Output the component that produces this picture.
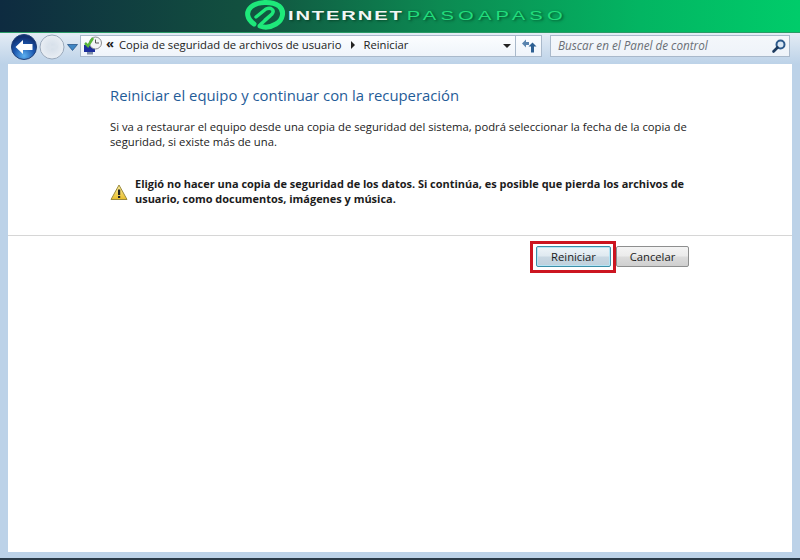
<div class="window">
  <header class="banner">
    <svg class="logo" width="42" height="30" viewBox="0 0 42 30">
      <path d="M10 24 C3 19 1.500 12 7 7 C13 1.500 28 1 35 6 C41 11 39 20 32 24 C27 27 21 28 16 26" fill="none" stroke="#1ee87a" stroke-width="5" stroke-linecap="round"/>
      <path d="M12 17 L22 9 C27 7 31 10 28 14 L21 20 M17 24 L26 16" stroke="#1ee87a" stroke-width="3.500" fill="none" stroke-linecap="round"/>
    </svg>
    <span class="brand"><span class="w">INTERNET</span><span class="g">PASOAPASO</span></span>
  </header>
  <div class="frame">
    <nav class="toolbar">
      <div class="navbtns">
        <svg width="72" height="30" viewBox="0 0 72 30">
          <defs>
            <radialGradient id="b" cx="50%" cy="85%" r="75%"><stop offset="0" stop-color="#5cb0f0"/><stop offset="0.55" stop-color="#1c58b0"/><stop offset="1" stop-color="#102f70"/></radialGradient>
            <radialGradient id="s" cx="50%" cy="50%" r="60%"><stop offset="0" stop-color="#d3dde8"/><stop offset="0.8" stop-color="#e8edf3"/><stop offset="1" stop-color="#f4f7fa"/></radialGradient>
          </defs>
          <circle cx="14" cy="14" r="12.500" fill="url(#b)" stroke="#1f3f78"/>
          <path d="M5.500 14 L13 7 V11 H22.500 V17 H13 V21Z" fill="#fff"/>
          <circle cx="42" cy="14" r="12" fill="url(#s)" stroke="#9aa9bb"/>
          <path d="M36 14 L41 10 V12.500 H48 V15.500 H41 V18Z" fill="#dbe3ec"/>
          <path d="M57.500 11.500 H67.500 L62.500 17.500Z" fill="#3f86c4" stroke="#1d4c80" stroke-width="0.700"/>
        </svg>
      </div>
      <div class="address">
        <svg class="cp" width="20" height="20" viewBox="0 0 20 20">
          <rect x="1" y="9" width="11" height="7" fill="#1c2f9c"/>
          <rect x="4" y="16" width="6" height="2.500" fill="#7f8ea8"/>
          <circle cx="12.500" cy="7" r="6" fill="#f2f4f6" stroke="#8b8f94"/>
          <path d="M12.500 3.500V7H16" stroke="#555" fill="none"/>
          <path d="M2 7 L5 10 L10 2" stroke="#57b53a" stroke-width="2.500" fill="none"/>
        </svg>
        <span class="chev">«</span>
        <span class="crumb">Copia de seguridad de archivos de usuario</span>
        <span class="tri"></span>
        <span class="crumb">Reiniciar</span>
        <span class="drop"></span>
        <span class="refresh">
          <svg width="16" height="16" viewBox="0 0 16 16">
            <path d="M1 5.500 L5 1.500 V4 H8 V7 H5 V9.500Z" fill="#5a84ae"/>
            <path d="M15.500 8.500 L11.500 4.500 L7.500 8.500 H10 V14.500 H13 V8.500Z" fill="#2d5f92"/>
          </svg>
        </span>
      </div>
      <div class="search">
        <span class="ph">Buscar en el Panel de control</span>
        <svg width="16" height="16" viewBox="0 0 16 16">
          <circle cx="9.500" cy="6.500" r="4" fill="#dbe8f5" stroke="#2d5a8c" stroke-width="2"/>
          <path d="M6.500 9.500 L2.500 13.500" stroke="#1d3a5e" stroke-width="2.600" stroke-linecap="round"/>
        </svg>
      </div>
    </nav>
    <main class="content">
      <div class="body">
        <h1>Reiniciar el equipo y continuar con la recuperación</h1>
        <p class="intro">Si va a restaurar el equipo desde una copia de seguridad del sistema, podrá seleccionar la fecha de la copia de seguridad, si existe más de una.</p>
        <div class="warning">
          <svg width="18" height="17" viewBox="0 0 18 17">
            <defs><linearGradient id="y" x1="0" y1="0" x2="0" y2="1"><stop offset="0" stop-color="#fdf0a0"/><stop offset="1" stop-color="#e8bd2c"/></linearGradient></defs>
            <path d="M9 1 L17 15.500 H1Z" fill="url(#y)" stroke="#9b8a3c" stroke-linejoin="round"/>
            <rect x="8" y="5.500" width="2.200" height="5.500" fill="#222"/>
            <rect x="8" y="12" width="2.200" height="2" fill="#222"/>
          </svg>
          <strong>Eligió no hacer una copia de seguridad de los datos. Si continúa, es posible que pierda los archivos de usuario, como documentos, imágenes y música.</strong>
        </div>
      </div>
      <div class="actions">
        <span class="highlight"><button class="btn primary">Reiniciar</button></span>
        <button class="btn">Cancelar</button>
      </div>
    </main>
  </div>
</div>

<style>
  :global(body) { margin: 0; background: #1a2f3c; }
  .window { width: 800px; height: 560px; display: flex; flex-direction: column; overflow: hidden; font-family: "Open Sans", "Noto Sans", sans-serif; color: #1c1c1c; }
  .banner { height: 33px; flex: none; box-sizing: border-box; display: flex; align-items: center; padding-left: 244px; gap: 2px; background: linear-gradient(90deg, #0e2b40 0%, #12503f 30%, #0c8a52 55%, #03b562 80%, #00cc6a 100%); border-bottom: 1px solid #2b9a66; }
  .logo { flex: none; margin-top: -2px; }
  .brand { font-family: "Liberation Sans", sans-serif; font-size: 13px; font-weight: 700; letter-spacing: 1.2px; transform: scaleX(1.55); transform-origin: left center; white-space: nowrap; text-shadow: 1px 1px 2px rgba(0,40,20,.6); margin-top: -1px; }
  .w { color: #f2f6f4; }
  .g { color: #22dd7c; margin-left: 2px; font-weight: 400; letter-spacing: 2.7px; }
  .frame { flex: 1; display: flex; flex-direction: column; background: #bcd2e8; padding: 0 8px 6px; border-bottom: 2px solid #2a3a48; }
  .toolbar { height: 31px; flex: none; display: flex; align-items: flex-start; background: linear-gradient(#e4ecf5, #bcd2e8); margin: 0 -8px; padding: 0 10px; box-sizing: border-box; }
  .navbtns { width: 70px; height: 30px; flex: none; }
  .address { width: 462px; height: 22px; flex: none; margin-top: 2px; display: flex; align-items: center; background: linear-gradient(#fbfdff, #eff4fa); border: 1px solid #a9b9cb; box-sizing: border-box; font-size: 11.25px; line-height: 18px; padding-bottom: 2px; position: relative; }
  .cp { margin-left: 2px; flex: none; margin-bottom: -2px; }
  .chev { font-size: 13px; font-weight: 700; margin-left: 3px; margin-right: 5px; line-height: 1; margin-top: -3px; }
  .crumb { white-space: nowrap; color: #222; }
  .tri { width: 0; height: 0; border-left: 4px solid #222; border-top: 4px solid transparent; border-bottom: 4px solid transparent; margin: 0 8px 0 10px; }
  .drop { position: absolute; right: 30px; top: 8px; width: 0; height: 0; border-top: 4px solid #222; border-left: 4px solid transparent; border-right: 4px solid transparent; }
  .refresh { position: absolute; right: 0; top: -1px; width: 25px; height: 22px; border-left: 1px solid #a9b9cb; display: flex; align-items: center; justify-content: center; }
  .search { width: 240px; height: 22px; flex: none; margin-left: 8px; margin-top: 2px; box-sizing: border-box; background: linear-gradient(#f4f7fb, #eef3f9); border: 1px solid #a9b9cb; display: flex; align-items: center; justify-content: space-between; padding: 0 2px 2px 7px; }
  .search svg { margin-bottom: -2px; }
  .ph { font-size: 11.7px; font-style: italic; color: #6a6f76; }
  .content { flex: 1; background: #fff; display: flex; flex-direction: column; }
  .body { padding: 21px 102px 0; box-sizing: border-box; border-bottom: 1px solid #d6d6d6; flex: none; height: 172px; }
  h1 { margin: 0; font-size: 14.85px; font-weight: 400; color: #1f5c98; line-height: 20px; }
  .intro { margin: 14px 0 0; font-size: 11.25px; line-height: 15px; }
  .warning { display: flex; gap: 7px; margin-top: 27px; align-items: center; }
  .warning svg { flex: none; margin-top: 2px; }
  strong { font-size: 10.96px; line-height: 15px; font-weight: 700; display: block; }
  .actions { display: flex; justify-content: flex-end; align-items: flex-start; padding: 5px 103px 0 0; }
  .highlight { border: 3px solid #cc1520; padding: 2px 2px 3px 3px; display: flex; }
  .btn { width: 73px; height: 21px; margin-top: 5px; box-sizing: border-box; font: 11.25px "Open Sans", "Noto Sans", sans-serif; color: #1c1c1c; padding: 0; border: 1px solid #8e8f8f; border-radius: 2px; background: linear-gradient(#f4f4f4 0%, #ebebeb 48%, #dcdcdc 52%, #cfcfcf 100%); }
  .primary { width: 75px; margin-top: 0; border-color: #3c8fa8; box-shadow: inset 0 0 0 1px #b6e4f5; background: linear-gradient(#eef5f9 0%, #dfe9f0 48%, #c9d8e3 52%, #bfd0dc 100%); }
</style>
